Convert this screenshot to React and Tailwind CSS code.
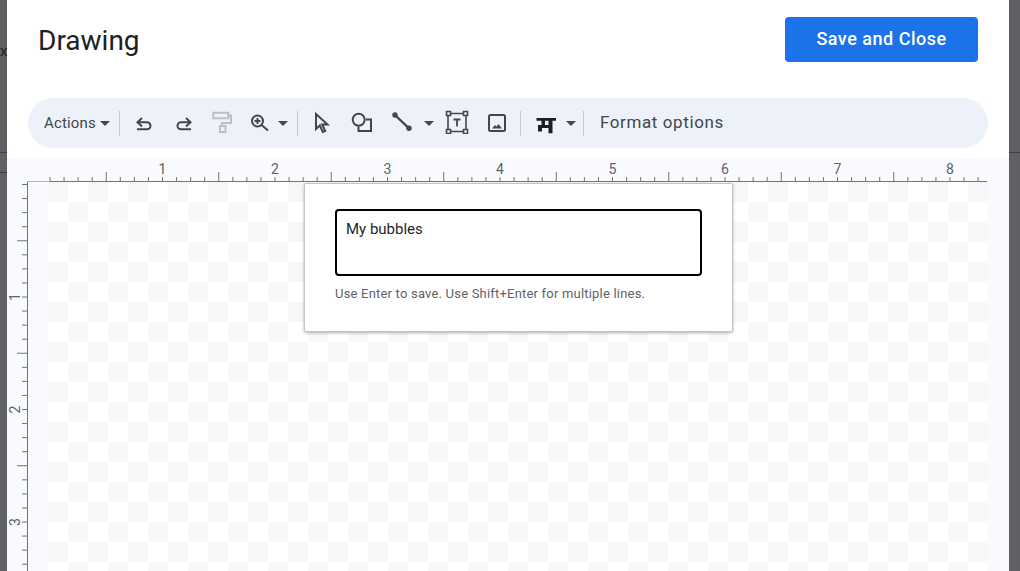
const INCH = 112.5;

function HRuler() {
  const ticks = [];
  for (let i = 0; i <= 66; i++) {
    const x = 43 + (i * INCH) / 8;
    const tall = i % 8 === 4;
    ticks.push(<line key={i} x1={x} x2={x} y1={tall ? 14 : 19} y2={23} stroke="#70757a" strokeWidth="1" />);
  }
  return (
    <svg width="1002" height="24" className="block">
      {ticks}
      <line x1="20" x2="43" y1="23.5" y2="23.5" stroke="#b4b6b9" strokeWidth="1" />
      <line x1="43" x2="980" y1="23.5" y2="23.5" stroke="#70757a" strokeWidth="1" />
      {[1, 2, 3, 4, 5, 6, 7, 8].map((n) => (
        <text key={n} x={43 + n * INCH} y="16" fontSize="14" fontFamily="Roboto, sans-serif" fill="#5f6368" textAnchor="middle">
          {n}
        </text>
      ))}
    </svg>
  );
}

function VRuler() {
  const ticks = [];
  for (let i = 0; i <= 32; i++) {
    const y = 2.5 + (i * INCH) / 8;
    const tall = i % 8 === 4;
    ticks.push(<line key={i} x1={tall ? 10 : 15} x2={20} y1={y} y2={y} stroke="#70757a" strokeWidth="1" />);
  }
  return (
    <svg width="41" height="389" className="block shrink-0">
      {ticks}
      <line x1="20.5" x2="20.5" y1="0" y2="389" stroke="#70757a" strokeWidth="1" />
      {[1, 2, 3].map((n) => (
        <text key={n} transform={`translate(13 ${2.5 + n * INCH}) rotate(-90)`} fontSize="14" fontFamily="Roboto, sans-serif" fill="#5f6368" textAnchor="middle">
          {n}
        </text>
      ))}
    </svg>
  );
}

const Icon = ({ children, className = "" }) => (
  <svg width="24" height="24" viewBox="0 0 24 24" fill="none" stroke="#444746" strokeWidth="2" className={"shrink-0 mb-[2px] " + className}>
    {children}
  </svg>
);

const Caret = ({ className = "" }) => (
  <svg width="10" height="5" viewBox="0 0 10 5" className={"shrink-0 " + className}>
    <path d="M0 0h10L5 5z" fill="#444746" />
  </svg>
);

const Sep = ({ className = "" }) => <div className={"w-px h-[25px] bg-[#c7c7c7] shrink-0 " + className} />;

function Toolbar() {
  return (
    <div className="mx-[21px] h-[50px] rounded-full bg-[#edf2fa] flex items-center pl-4 text-[#444746]">
      <span className="w-[53px] shrink-0 text-[15px] tracking-[0.15px] font-['Roboto',sans-serif]">Actions</span>
      <Caret className="ml-[3px]" />
      <Sep className="ml-[9px]" />
      <Icon className="ml-[12px]">
        <path d="M10 8 5.5 12.3 10 16.5M5.5 12.3H15a3.5 3.5 0 0 1 0 7H5" />
      </Icon>
      <Icon className="ml-[16px]">
        <path d="M14 8l4.5 4.3L14 16.5M18.5 12.3H9a3.5 3.5 0 0 0 0 7h10" />
      </Icon>
      <Icon className="ml-[13px]">
        <path d="M4.3 2.8h15v5.5h-15zM19.5 5.5H22V13H13v3M11 16h5.5v6H11z" stroke="#bdc1c6" />
      </Icon>
      <Icon className="ml-[15px]">
        <circle cx="9.5" cy="11" r="5.5" />
        <path d="M13.5 15l6.5 5.5M9.5 8v6M6.5 11h6" />
      </Icon>
      <Caret className="ml-[6px]" />
      <Sep className="ml-[9px]" />
      <Icon className="ml-[11px]">
        <path d="M7 4v15l3.8-3.5 3 6.5 2.4-1-3-6.5H18.5z" />
      </Icon>
      <Icon className="ml-[17px]">
        <circle cx="8.7" cy="9.7" r="6" />
        <path d="M16 9.5H21V21H8.5V16.5" />
      </Icon>
      <Icon className="ml-[16px]">
        <path d="M5 5l14 13.3" strokeWidth="2.4" />
        <circle cx="5" cy="5" r="2.7" fill="#444746" stroke="none" />
        <circle cx="19" cy="18.3" r="2.7" fill="#444746" stroke="none" />
      </Icon>
      <Caret className="ml-[10px]" />
      <Icon className="ml-[11px]">
        <g transform="translate(0 0.5)">
          <path d="M5 3h14M5 21h14M3 5v14M21 5v14" strokeWidth="1.6" />
          <path d="M1.5 1h4v4h-4zM18.5 1h4v4h-4zM1.5 19h4v4h-4zM18.5 19h4v4h-4z" strokeWidth="1.6" />
          <path d="M8.5 9h7M12 9v7" strokeWidth="1.8" />
        </g>
      </Icon>
      <Icon className="ml-[16px]">
        <rect x="4" y="5" width="16" height="16" rx="1.5" />
        <path d="M7 18.5l3-3.5 1.5 1.5 2-2.5 3.5 4.5z" fill="#444746" stroke="none" />
      </Icon>
      <Sep className="ml-[11px]" />
      <Icon className="ml-[12px]">
        <path
          d="M3.5 8H23V10.8H19.5V23.2H15.5V18H9V21.5H5V15H8.5V10.8H3.5ZM12 10.8V15H15.5V10.8Z"
          fill="#1f1f1f"
          fillRule="evenodd"
          stroke="none"
        />
      </Icon>
      <Caret className="ml-[9px]" />
      <Sep className="ml-[7px]" />
      <span className="ml-4 text-[17px] tracking-[0.6px] font-['Roboto',sans-serif]">Format options</span>
    </div>
  );
}

function Popup() {
  return (
    <div className="absolute left-[297px] top-[25px] w-[429px] h-[149px] bg-white border border-[#c4c4c4] rounded-[2px] shadow-[0_1px_3px_rgba(60,64,67,0.4)] pl-[30px] pt-[25px] font-['Roboto',sans-serif]">
      <div className="w-[367px] h-[67px] border-2 border-black rounded-[4px] px-[9px] pt-[9px] text-[15px] leading-[18px] text-[#1f1f1f]">
        My bubbles
      </div>
      <p className="mt-[10px] text-[13px] leading-4 tracking-[0.2px] text-[#5f6368]">
        Use Enter to save. Use Shift+Enter for multiple lines.
      </p>
    </div>
  );
}

export default function App() {
  return (
    <div className="w-[1020px] h-[571px] overflow-hidden flex bg-[#5f6063]">
      <div className="w-[7px] shrink-0 relative">
        <span className="absolute left-0 top-[40px] text-[15px] text-[#222] font-['Roboto',sans-serif]">x</span>
        <div className="absolute left-0 right-0 top-[152px] h-px bg-[#3f3f41]" />
        <div className="absolute left-0 right-0 top-[172px] h-px bg-[#3f3f41]" />
      </div>
      <div className="w-[1002px] shrink-0 bg-white flex flex-col">
        <header className="h-[98px] shrink-0 flex items-start justify-between pl-[31px] pr-[31px] pt-[17px]">
          <h1 className="text-[28px] leading-[48px] text-[#202124] font-['Roboto',sans-serif]">Drawing</h1>
          <button className="w-[193px] h-[45px] pb-[2px] rounded-[4px] bg-[#1a73e8] text-white text-[18px] tracking-[0.5px] font-medium font-['Roboto',sans-serif]">
            Save and Close
          </button>
        </header>
        <Toolbar />
        <div className="mt-[10px] flex-1 bg-[#f8fafd] relative">
          <HRuler />
          <div className="flex">
            <VRuler />
            <div className="w-[939px] h-[389px] bg-white bg-[conic-gradient(#ffffff_25%,#f7f7f7_0_50%,#ffffff_0_75%,#f7f7f7_0)] bg-[length:40px_40px]" />
          </div>
          <Popup />
        </div>
      </div>
      <div className="flex-1 relative">
        <div className="absolute left-0 right-0 top-[152px] h-px bg-[#3f3f41]" />
      </div>
    </div>
  );
}
